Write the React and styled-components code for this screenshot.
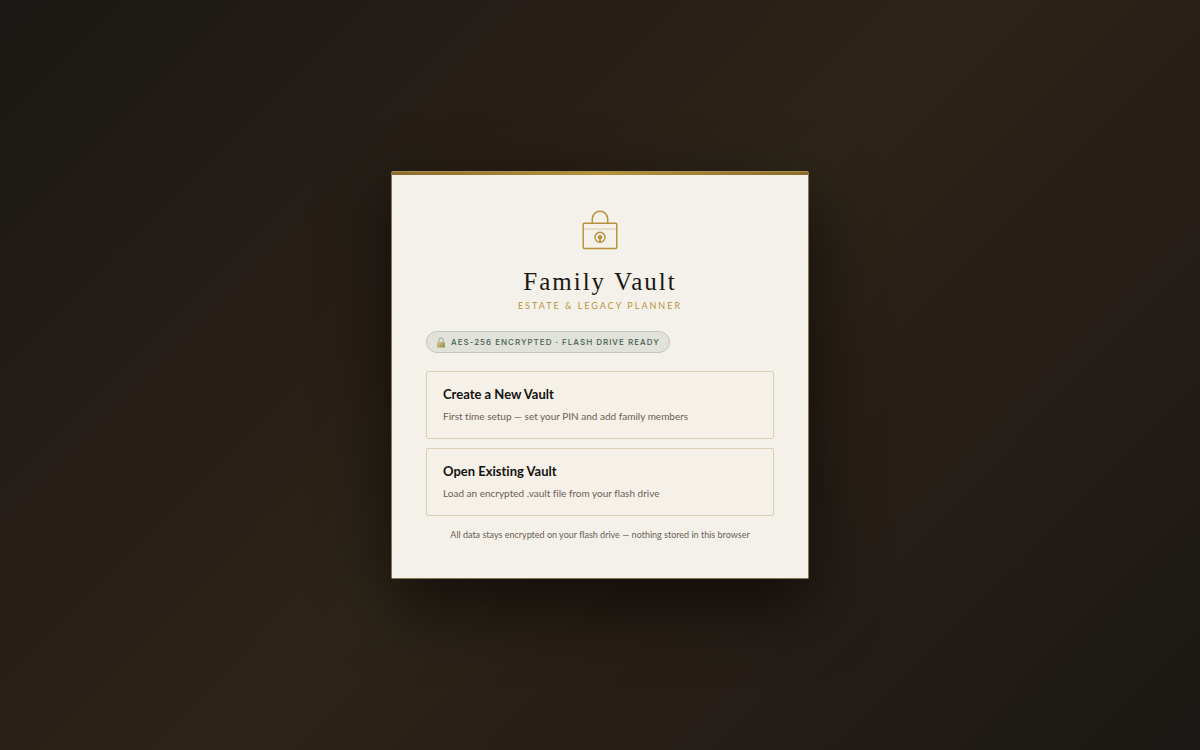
import React from "react";
import styled, { createGlobalStyle } from "styled-components";

const actions = [
  {
    id: "create",
    title: "Create a New Vault",
    description: "First time setup — set your PIN and add family members",
  },
  {
    id: "open",
    title: "Open Existing Vault",
    description: "Load an encrypted .vault file from your flash drive",
  },
];

const VaultIcon = () => (
  <svg width="40" height="44" viewBox="0 0 40 44" fill="none" aria-hidden="true">
    <rect x="3.2" y="16.2" width="33.6" height="25.2" rx="1" stroke="#b8923a" strokeWidth="1.5" />
    <path d="M12.3 16V12a7.7 7.7 0 0 1 15.4 0V16" stroke="#b8923a" strokeWidth="1.5" />
    <path d="M3.5 22h33" stroke="#b8923a" strokeWidth="0.8" opacity="0.55" />
    <circle cx="20" cy="30.2" r="5" stroke="#b8923a" strokeWidth="1.5" />
    <circle cx="20" cy="30.2" r="2.2" fill="#b8923a" />
    <path d="M20 31v4.4" stroke="#b8923a" strokeWidth="1.7" />
  </svg>
);

const BadgeLock = () => (
  <svg width="10" height="11" viewBox="0 0 10 11" fill="none" aria-hidden="true">
    <defs>
      <linearGradient id="lockBody" x1="0" y1="0" x2="1" y2="1">
        <stop offset="0" stopColor="#d6cb91" />
        <stop offset="1" stopColor="#938544" />
      </linearGradient>
    </defs>
    <path d="M2.8 5.4V3.2a2.2 2.2 0 0 1 4.4 0v2.2" stroke="#a9b0aa" strokeWidth="1.1" />
    <rect x="1" y="5" width="8" height="5.5" rx="0.6" fill="url(#lockBody)" />
  </svg>
);

const App = () => {
  return (
    <>
      <GlobalStyle />
      <Page>
        <Card>
          <Header>
            <VaultIcon />
            <Title>Family Vault</Title>
            <Subtitle>Estate &amp; Legacy Planner</Subtitle>
          </Header>
          <Badge>
            <BadgeLock />
            AES-256 Encrypted · Flash Drive Ready
          </Badge>
          <Actions>
            {actions.map((action) => (
              <ActionButton key={action.id} type="button">
                <ActionTitle>{action.title}</ActionTitle>
                <ActionText>{action.description}</ActionText>
              </ActionButton>
            ))}
          </Actions>
          <Note>
            All data stays encrypted on your flash drive — nothing stored in this browser
          </Note>
        </Card>
      </Page>
    </>
  );
};

const GlobalStyle = createGlobalStyle`
  * {
    box-sizing: border-box;
  }
  body {
    margin: 0;
    font-family: Lato, "Liberation Sans", sans-serif;
    font-variant-ligatures: none;
  }
`;

const Page = styled.main`
  display: flex;
  align-items: center;
  justify-content: center;
  min-height: 100vh;
  background: linear-gradient(
    135deg,
    #1a1814 0%,
    #251d17 25%,
    #281f16 36%,
    #2d2519 50%,
    #281f16 62%,
    #251d17 75%,
    #1a1814 100%
  );
`;

const Card = styled.section`
  width: 100%;
  max-width: 418px;
  padding: 31px 34px 36px;
  background:
    linear-gradient(90deg, #8b6c2c, #b8923a, #8b6c2c) top / 100% 3px no-repeat,
    #f4f1ea;
  border: 1px solid #857754;
  border-top-color: #a88d50;
  border-radius: 2px;
  box-shadow: 0 26px 68px rgba(0, 0, 0, 0.6);
`;

const Header = styled.header`
  display: flex;
  flex-direction: column;
  align-items: center;
  padding-top: 4px;
  margin-bottom: 18px;
`;

const Title = styled.h1`
  margin: 14px 0 0;
  font-family: "Liberation Serif", serif;
  font-size: 25px;
  font-weight: 400;
  line-height: 34px;
  letter-spacing: 2px;
  color: #1a1814;
`;

const Subtitle = styled.p`
  margin: 0;
  font-size: 9px;
  line-height: 14px;
  letter-spacing: 2px;
  text-transform: uppercase;
  color: #b8923a;
`;

const Badge = styled.div`
  display: inline-flex;
  align-items: center;
  gap: 5px;
  padding: 3px 9px;
  border: 1px solid #c2c8be;
  border-radius: 20px;
  background: #e1e2da;
  font-family: Inter, sans-serif;
  font-size: 8px;
  font-weight: 500;
  line-height: 14px;
  letter-spacing: 1px;
  text-transform: uppercase;
  color: #455f51;
`;

const Actions = styled.div`
  display: flex;
  flex-direction: column;
  gap: 9px;
  margin-top: 18px;
`;

const ActionButton = styled.button`
  display: flex;
  flex-direction: column;
  gap: 6px;
  width: 100%;
  padding: 14px 16px;
  border: 1px solid #dccdb5;
  border-radius: 2px;
  background: #f5f0e8;
  font: inherit;
  font-variant-ligatures: none;
  text-align: left;
  cursor: pointer;

  &:hover {
    border-color: #b8923a;
  }
`;

const ActionTitle = styled.span`
  font-size: 13px;
  font-weight: 700;
  line-height: 16px;
  color: #14120f;
`;

const ActionText = styled.span`
  font-size: 10px;
  line-height: 16px;
  color: #6b6055;
`;

const Note = styled.p`
  margin: 12px 0 0;
  font-size: 9px;
  line-height: 14px;
  text-align: center;
  color: #6b6055;
`;

export default App;
